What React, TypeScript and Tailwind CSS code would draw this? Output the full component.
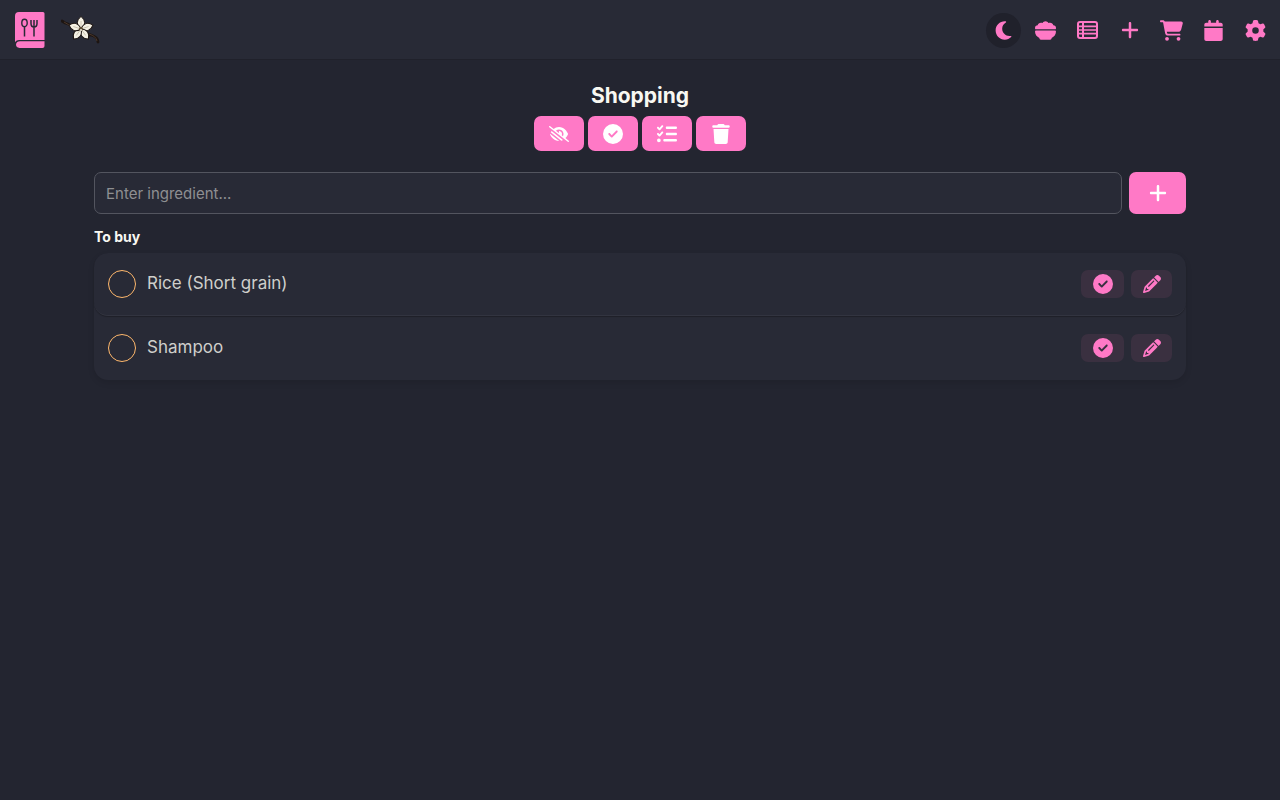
import { useState, type ReactNode } from "react";
import {
  FaBowlFood,
  FaCalendar,
  FaCartShopping,
  FaCircleCheck,
  FaEyeLowVision,
  FaGear,
  FaListCheck,
  FaMoon,
  FaPencil,
  FaPlus,
  FaTrash,
} from "react-icons/fa6";

interface Item {
  id: number;
  name: string;
}

const ITEMS: Item[] = [
  { id: 1, name: "Rice (Short grain)" },
  { id: 2, name: "Shampoo" },
];

function TableIcon() {
  return (
    <svg width="21" height="18" viewBox="0 0 21 18" fill="none" stroke="currentColor">
      <rect x="1" y="1" width="19" height="16" rx="2" strokeWidth="2" />
      <path d="M6 1V17" strokeWidth="2" />
      <path d="M1 5.300H20M1 9H20M1 12.700H20" strokeWidth="1.700" />
    </svg>
  );
}

const NAV_LINKS = [
  { label: "Meals", icon: <FaBowlFood size={21} /> },
  { label: "Recipes", icon: <TableIcon /> },
  { label: "Add recipe", icon: <FaPlus size={20} /> },
  { label: "Shopping", icon: <FaCartShopping size={23} className="shrink-0" /> },
  { label: "Planner", icon: <FaCalendar size={21} /> },
  { label: "Settings", icon: <FaGear size={21} /> },
];

function BookLogo() {
  return (
    <svg width="30" height="36" viewBox="0 0 30 36" fill="none">
      <path d="M4 0H28Q29.500 0 29.500 1.500V28H4Q1.500 28 0 30V4Q0 0 4 0Z" fill="#ff79c6" />
      <path d="M5 29.200H29.500V34Q29.500 36 27.500 36H4.500Q1 35.500 1 32.500Q1.500 29.200 5 29.200Z" fill="#ff79c6" />
      <ellipse cx="9.500" cy="11" rx="2.700" ry="3.700" stroke="#282a36" strokeWidth="1.400" />
      <path d="M9.500 15V24.500M19 8V24.500M16 8V11.500Q16 15 19 15Q22 15 22 11.500V8" stroke="#282a36" strokeWidth="1.500" />
    </svg>
  );
}

function VanillaFlower() {
  return (
    <svg width="40" height="30" viewBox="0 0 40 30" fill="none">
      <path d="M1 6L4 8Q9 9 14 14Q24 19 30 20Q37 22 37 27" stroke="#1d1512" strokeWidth="2.800" strokeLinecap="round" />
      <path d="M3 7L8 10M28 19Q35 21 36 26" stroke="#49362a" strokeWidth="1" />
      {[0, 72, 144, 216, 288].map((deg) => (
        <path
          key={deg}
          d="M20 14C15 10 15.500 5 20 1.500C24.500 5 25 10 20 14Z"
          transform={`rotate(${deg} 20 14)`}
          fill="#f5f1e4"
          stroke="#1d1512"
          strokeWidth="1"
        />
      ))}
      {[0, 72, 144, 216, 288].map((deg) => (
        <path key={deg} d="M20 13V6" transform={`rotate(${deg} 20 14)`} stroke="#b5ad98" strokeWidth="0.600" />
      ))}
      <circle cx="20" cy="14" r="2" fill="#5a4a32" />
      <circle cx="20" cy="15" r="1" fill="#f5f1e4" />
    </svg>
  );
}

function ToolButton({ label, children }: { label: string; children: ReactNode }) {
  return (
    <button
      aria-label={label}
      className="flex h-[35px] w-[50px] cursor-pointer items-center justify-center rounded-[7px] bg-[#ff79c6] text-white"
    >
      {children}
    </button>
  );
}

function ItemRow({ item }: { item: Item }) {
  return (
    <li className="flex h-[63px] items-center rounded-[14px] border-b border-[#ffffff0d] px-3.5 shadow-[0_1px_1px_#00000040] last:border-transparent last:shadow-none">
      <label className="flex flex-1 items-center gap-[11px] text-[17px] leading-6 text-[#cfcfcb]">
        <input
          type="checkbox"
          className="size-7 appearance-none rounded-full border border-[#ffb86c] checked:bg-[#ffb86c]"
        />
        <span className="pb-0.5">{item.name}</span>
      </label>
      <div className="flex gap-[7px] text-[#ff79c6]">
        <button
          aria-label={`Always have ${item.name}`}
          className="flex h-7 w-[43px] cursor-pointer items-center justify-center rounded-[7px] bg-[#3a3040]"
        >
          <FaCircleCheck size={20} />
        </button>
        <button
          aria-label={`Edit ${item.name}`}
          className="flex h-7 w-[41px] cursor-pointer items-center justify-center rounded-[7px] bg-[#3a3040]"
        >
          <FaPencil size={18} />
        </button>
      </div>
    </li>
  );
}

export default function App() {
  const [text, setText] = useState("");

  return (
    <div className="min-h-screen bg-[#232530] font-['Inter',sans-serif] text-[#f8f8f2]">
      <header className="flex h-[60px] items-center justify-between bg-[#282a36] pr-3.5 pl-[15px] shadow-[inset_0_-1px_0_#20212b]">
        <div className="flex items-center gap-4">
          <a href="#" aria-label="Home">
            <BookLogo />
          </a>
          <a href="#" aria-label="Vanilla">
            <VanillaFlower />
          </a>
        </div>
        <nav className="flex items-center gap-[21px] text-[#ff79c6]">
          <button
            aria-label="Toggle dark mode"
            className="-mr-[7px] flex size-[35px] cursor-pointer items-center justify-center rounded-full bg-[#20212b]"
          >
            <FaMoon size={21} />
          </button>
          {NAV_LINKS.map((link) => (
            <a key={link.label} href="#" aria-label={link.label} className="flex w-[21px] justify-center">
              {link.icon}
            </a>
          ))}
        </nav>
      </header>

      <main className="px-[94px] pt-[21px]">
        <h1 className="text-center text-[21px] leading-[30px] font-bold">Shopping</h1>
        <div className="mt-[5px] flex justify-center gap-1">
          <ToolButton label="Hide bought">
            <FaEyeLowVision size={20} />
          </ToolButton>
          <ToolButton label="Mark all">
            <FaCircleCheck size={20} />
          </ToolButton>
          <ToolButton label="Show checklist">
            <FaListCheck size={20} />
          </ToolButton>
          <ToolButton label="Delete all">
            <FaTrash size={20} />
          </ToolButton>
        </div>

        <form className="mt-[21px] flex gap-[7px]" onSubmit={(e) => e.preventDefault()}>
          <input
            type="text"
            aria-label="Ingredient"
            placeholder="Enter ingredient..."
            value={text}
            onChange={(e) => setText(e.target.value)}
            className="h-[42px] min-w-0 flex-1 rounded-[7px] border border-[#53555f] bg-[#282a36] px-[11px] text-[15px] placeholder:text-[#8e8f92]"
          />
          <button
            aria-label="Add ingredient"
            className="flex h-[42px] w-[57px] cursor-pointer items-center justify-center rounded-[7px] bg-[#ff79c6] text-white"
          >
            <FaPlus size={20} />
          </button>
        </form>

        <h2 className="mt-[13px] text-sm leading-5 font-bold">To buy</h2>
        <ul className="mt-1.5 flex flex-col gap-px rounded-[14px] bg-[#282a36] shadow-[0_3px_6px_#0000001a]">
          {ITEMS.map((item) => (
            <ItemRow key={item.id} item={item} />
          ))}
        </ul>
      </main>
    </div>
  );
}
